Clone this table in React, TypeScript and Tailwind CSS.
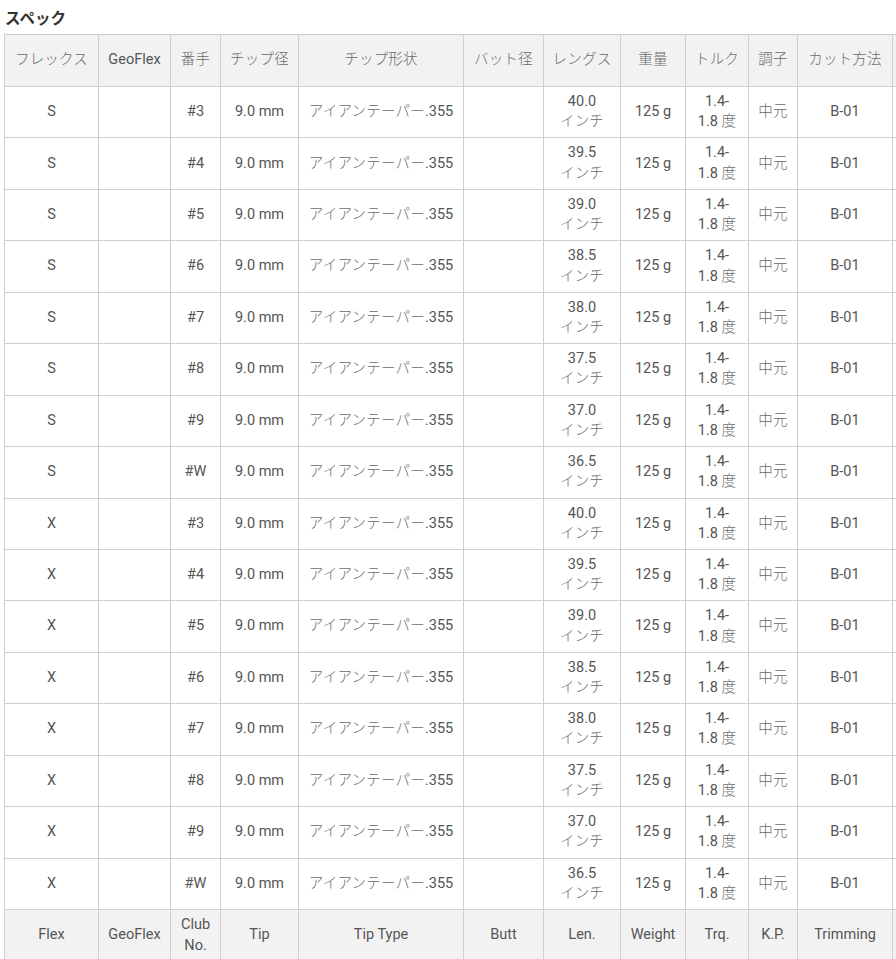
const cols = [94, 72, 50, 78, 165, 80, 77, 65, 63, 49, 95, 120];

const headJa = ['フレックス', 'GeoFlex', '番手', 'チップ径', 'チップ形状', 'バット径', 'レングス', '重量', 'トルク', '調子', 'カット方法', ''];
const headEn = ['Flex', 'GeoFlex', 'Club No.', 'Tip', 'Tip Type', 'Butt', 'Len.', 'Weight', 'Trq.', 'K.P.', 'Trimming', ''];

const clubs = [
  { no: '#3', len: '40.0' },
  { no: '#4', len: '39.5' },
  { no: '#5', len: '39.0' },
  { no: '#6', len: '38.5' },
  { no: '#7', len: '38.0' },
  { no: '#8', len: '37.5' },
  { no: '#9', len: '37.0' },
  { no: '#W', len: '36.5' },
];

const rows = ['S', 'X'].flatMap((flex) => clubs.map((c) => ({ flex, ...c })));

const cell = 'border border-[#cfcfcf] px-[4px] text-center align-middle';

// Japanese glyphs render thinner/lighter in the reference
const J = ({ children }: { children: React.ReactNode }) => (
  <span className="font-light tracking-[0.2px] text-[#6b6b6b]">{children}</span>
);

export default function App() {
  return (
    <div
      className="min-h-screen bg-white pl-[4px] text-[#555]"
      style={{ fontFamily: 'Roboto, "Noto Sans CJK JP", sans-serif' }}
    >
      <h2 className="pl-[1px] pt-[9px] pb-[5px] text-[15.5px] font-bold leading-[20px] text-[#333]">
        スペック
      </h2>
      <div className="overflow-hidden">
        <table className="table-fixed border-collapse text-[14.5px] leading-[20.2px]" style={{ width: 1008 }}>
          <colgroup>
            {cols.map((w, i) => (
              <col key={i} style={{ width: w }} />
            ))}
          </colgroup>
          <thead>
            <tr className="h-[52px] bg-[#f2f2f2]">
              {headJa.map((h, i) => (
                <th key={i} className={`${cell} font-normal`}>
                  {h === 'GeoFlex' ? h : <J>{h}</J>}
                </th>
              ))}
            </tr>
          </thead>
          <tbody>
            {rows.map((r, i) => (
              <tr key={i} className="h-[51.45px]">
                <td className={cell}>{r.flex}</td>
                <td className={cell}></td>
                <td className={cell}>{r.no}</td>
                <td className={cell}>9.0 mm</td>
                <td className={cell}>
                  <J>アイアンテーパー</J>.355
                </td>
                <td className={cell}></td>
                <td className={cell}>
                  {r.len}
                  <br />
                  <J>インチ</J>
                </td>
                <td className={cell}>125 g</td>
                <td className={cell}>
                  1.4-
                  <br />
                  1.8 <J>度</J>
                </td>
                <td className={cell}>
                  <J>中元</J>
                </td>
                <td className={cell}>B-01</td>
                <td className={cell}></td>
              </tr>
            ))}
            <tr className="h-[52px] bg-[#f2f2f2]">
              {headEn.map((h, i) => (
                <td key={i} className={cell}>
                  {h === 'Club No.' ? (
                    <>
                      Club
                      <br />
                      No.
                    </>
                  ) : (
                    h
                  )}
                </td>
              ))}
            </tr>
          </tbody>
        </table>
      </div>
    </div>
  );
}
